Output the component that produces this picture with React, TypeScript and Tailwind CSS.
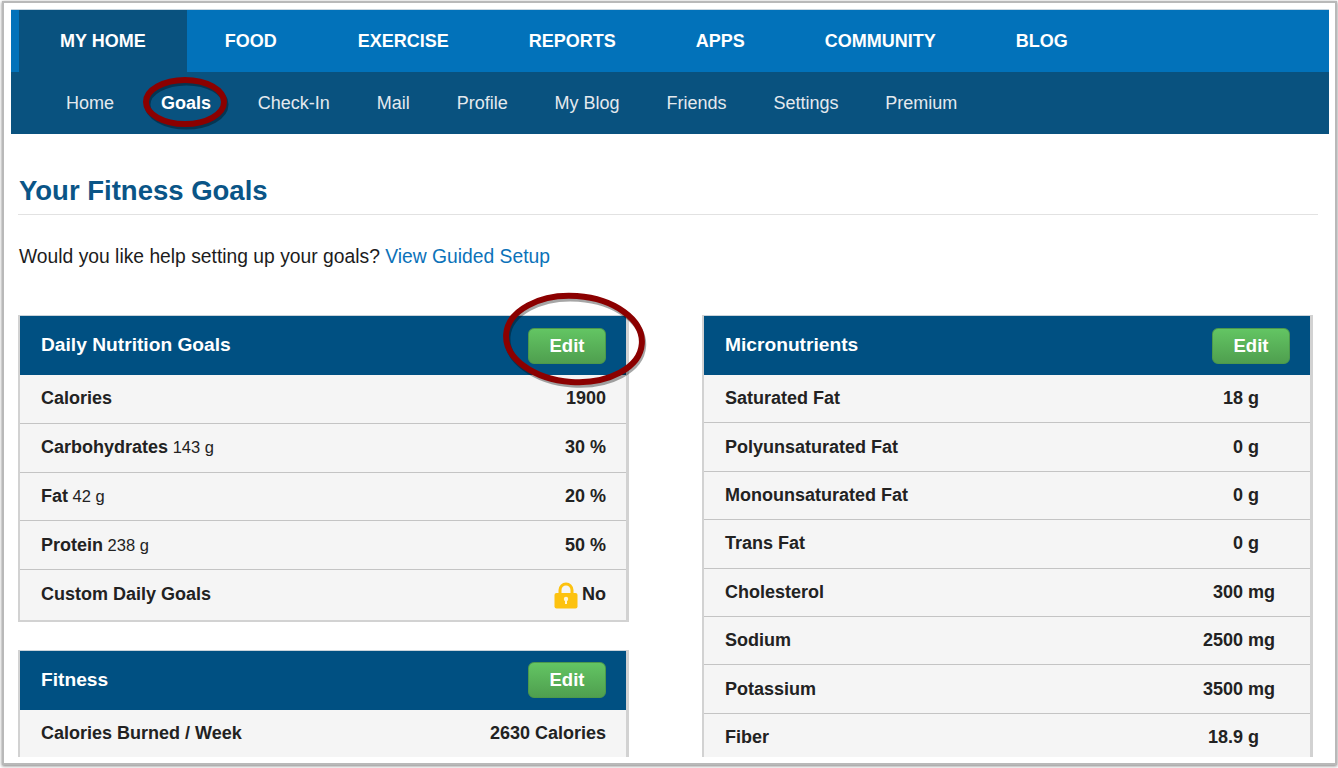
import React from 'react';

const TOP_TABS = ['MY HOME', 'FOOD', 'EXERCISE', 'REPORTS', 'APPS', 'COMMUNITY', 'BLOG'];
const SUB_TABS = ['Home', 'Goals', 'Check-In', 'Mail', 'Profile', 'My Blog', 'Friends', 'Settings', 'Premium'];

const MICROS = [
  ['Saturated Fat', '18', 'g'],
  ['Polyunsaturated Fat', '0', 'g'],
  ['Monounsaturated Fat', '0', 'g'],
  ['Trans Fat', '0', 'g'],
  ['Cholesterol', '300', 'mg'],
  ['Sodium', '2500', 'mg'],
  ['Potassium', '3500', 'mg'],
  ['Fiber', '18.9', 'g'],
];

function EditButton() {
  return (
    <button className="w-[78px] h-[36px] rounded-[6px] border border-[#4c984c] bg-gradient-to-b from-[#63c563] to-[#4f9f4f] text-[18.5px] font-bold text-white">
      Edit
    </button>
  );
}

function CardHeader({ title }: { title: string }) {
  return (
    <div className="h-[60px] bg-[#005082] flex items-center justify-between pl-[21px] pr-[20px] border-t border-[#c9d3da]">
      <span className="text-[19.2px] font-bold text-white">{title}</span>
      <EditButton />
    </div>
  );
}

function GoalRow({ label, note, children, last }: { label: string; note?: string; children: React.ReactNode; last?: boolean }) {
  return (
    <div className={`flex items-center justify-between pl-[21px] pr-[20px] bg-[#f5f5f5] text-[#222] ${last ? 'h-[49.5px]' : 'h-[48.75px] border-b border-[#c4c4c4]'}`}>
      <span className="text-[18px] font-bold">
        {label}
        {note && <span className="font-normal text-[16.5px]"> {note}</span>}
      </span>
      <span className="text-[18px] font-bold flex items-center">{children}</span>
    </div>
  );
}

function LockIcon() {
  return (
    <svg width="24" height="27" viewBox="0 0 24 27" className="mr-[4px] mt-[2px]">
      <path d="M6 12V8a6 6 0 0 1 12 0v4" fill="none" stroke="#fdc20f" strokeWidth="3" />
      <rect x="0.5" y="11" width="23" height="15.5" rx="2" fill="#fdc20f" />
      <circle cx="12" cy="17" r="2.2" fill="#fff6d8" />
      <rect x="11" y="17" width="2" height="5" fill="#fff6d8" />
    </svg>
  );
}

// red hand drawn ring from the annotation layer
function Ring({ className, w, h, rx, ry, tilt }: { className: string; w: number; h: number; rx: number; ry: number; tilt: number }) {
  return (
    <svg width={w} height={h} viewBox={`0 0 ${w} ${h}`} className={`absolute pointer-events-none ${className}`}>
      <ellipse cx={w / 2 + 1.5} cy={h / 2 + 2.5} rx={rx} ry={ry} fill="none" stroke="#000" strokeOpacity="0.35" strokeWidth="6" transform={`rotate(${tilt} ${w / 2} ${h / 2})`} />
      <ellipse cx={w / 2} cy={h / 2} rx={rx} ry={ry} fill="none" stroke="#8b0000" strokeWidth="6" transform={`rotate(${tilt} ${w / 2} ${h / 2})`} />
    </svg>
  );
}

export default function App() {
  return (
    <div className="relative w-[1338px] h-[768px] overflow-hidden bg-white font-['Liberation_Sans',Arial,sans-serif]">
      <div className="ml-[2px] mt-px w-[1335px] h-[764px] border-2 border-[#b9b9b9] bg-white shadow-[0_1px_3px_rgba(0,0,0,0.5)] pt-[6px] overflow-hidden">
        <div className="h-[748px] overflow-hidden">
          <nav className="ml-[7px] w-[1318px] border-t border-[#c8d6e0]">
            <div className="h-[62px] bg-[#0272ba] pl-[8px] flex">
              {TOP_TABS.map((tab, i) => (
                <a
                  key={tab}
                  className={`flex items-center text-[18px] font-bold text-white ${i === 0 ? 'bg-[#09527f] pl-[41px] pr-[41px]' : i === 1 ? 'pl-[38px] pr-[41px]' : 'px-10'}`}
                >
                  {tab}
                </a>
              ))}
            </div>
            <div className="h-[62px] bg-[#09527f] pl-[55px] flex items-center gap-[46.9px]">
              {SUB_TABS.map((tab, i) => (
                <a key={tab} className={`text-[18px] ${i === 1 ? 'font-bold text-white' : 'text-[#e4e9ee]'}`}>
                  {tab}
                </a>
              ))}
            </div>
          </nav>

          <div className="pl-[14px] pr-[17px]">
            <h1 className="mt-[41px] h-[40px] border-b border-[#e2e2e2] pl-px text-[27.5px] leading-[32px] font-bold text-[#0a5587]">
              Your Fitness Goals
            </h1>
            <p className="mt-[30px] pl-px text-[19.3px] leading-[24px] text-[#1c1c1c]">
              Would you like help setting up your goals? <a className="text-[#0b72b9]">View Guided Setup</a>
            </p>

            <div className="mt-[46px] flex items-start gap-[73px]">
              <div className="w-[611px] shrink-0">
                <div className="border-l-2 border-r-[3px] border-b-2 border-[#d2d2d2]">
                  <CardHeader title="Daily Nutrition Goals" />
                  <GoalRow label="Calories">1900</GoalRow>
                  <GoalRow label="Carbohydrates" note="143 g">30 %</GoalRow>
                  <GoalRow label="Fat" note="42 g">20 %</GoalRow>
                  <GoalRow label="Protein" note="238 g">50 %</GoalRow>
                  <GoalRow label="Custom Daily Goals" last>
                    <LockIcon />
                    No
                  </GoalRow>
                </div>
                <div className="mt-[28px] border-l-2 border-r-[3px] border-[#d2d2d2]">
                  <CardHeader title="Fitness" />
                  <GoalRow label="Calories Burned / Week">2630 Calories</GoalRow>
                </div>
              </div>

              <div className="w-[611px] shrink-0 border-l-2 border-r-[3px] border-[#d2d2d2]">
                <CardHeader title="Micronutrients" />
                {MICROS.map(([name, amount, unit]) => (
                  <div key={name} className="flex items-center justify-between h-[48.4px] pl-[21px] bg-[#f5f5f5] border-b border-[#c4c4c4] text-[18px] font-bold text-[#222]">
                    <span>{name}</span>
                    <span className="flex w-[104px] mr-[3px]">
                      <span className="w-[42px] text-right shrink-0 -ml-[2px]">{amount}</span>
                      <span className="ml-[5px]">{unit}</span>
                    </span>
                  </div>
                ))}
              </div>
            </div>
          </div>
        </div>
      </div>
      <Ring className="left-[138px] top-[72px]" w={94} h={60} rx={39} ry={22} tilt={0} />
      <Ring className="left-[494px] top-[284px]" w={160} h={110} rx={68} ry={43} tilt={4} />
    </div>
  );
}
